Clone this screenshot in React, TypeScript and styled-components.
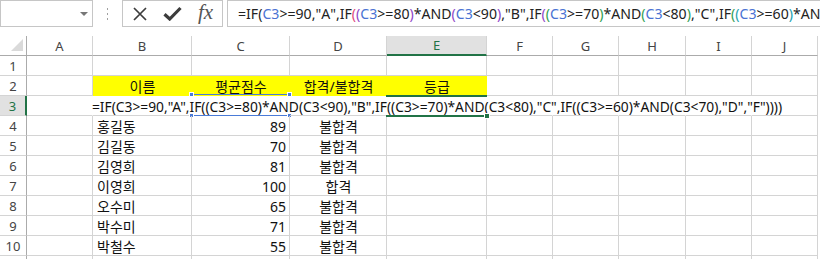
import styled, { createGlobalStyle } from 'styled-components';

const GlobalStyle = createGlobalStyle`
  *, *::before, *::after { box-sizing: border-box; }
  html, body { margin: 0; padding: 0; background: #fff; }
  body { font-family: 'Noto Sans', 'Noto Sans CJK KR', sans-serif; }
`;

const COLUMNS = ['A', 'B', 'C', 'D', 'E', 'F', 'G', 'H', 'I', 'J'];
const WIDTHS = [66, 99, 98, 97, 100, 66, 66, 67, 66, 66];

const HEADERS = ['이름', '평균점수', '합격/불합격', '등급'];

const STUDENTS: [string, number, string][] = [
  ['홍길동', 89, '불합격'],
  ['김길동', 70, '불합격'],
  ['김영희', 81, '불합격'],
  ['이영희', 100, '합격'],
  ['오수미', 65, '불합격'],
  ['박수미', 71, '불합격'],
  ['박철수', 55, '불합격'],
];

const FORMULA = '=IF(C3>=90,"A",IF((C3>=80)*AND(C3<90),"B",IF((C3>=70)*AND(C3<80),"C",IF((C3>=60)*AND(C3<70),"D","F"))))';

// formula bar colouring: refs blue, parens by nesting level
const REF = '#4a73d3';
const PAREN = ['#222', '#e0467c', '#8e44c8', '#2f9e52', '#1d9fb0', '#8e44c8'];

const tokenize = (src: string) => {
  const out: { text: string; color: string }[] = [];
  let depth = 0;
  let i = 0;
  while (i < src.length) {
    const ch = src[i];
    if (src.startsWith('C3', i)) {
      out.push({ text: 'C3', color: REF });
      i += 2;
    } else if (ch === '(') {
      out.push({ text: ch, color: PAREN[depth % PAREN.length] });
      depth++;
      i++;
    } else if (ch === ')') {
      depth--;
      out.push({ text: ch, color: PAREN[depth % PAREN.length] });
      i++;
    } else {
      out.push({ text: ch, color: '#222' });
      i++;
    }
  }
  return out;
};

const App = () => {
  const tokens = tokenize(FORMULA);

  const renderRow = (row: number) => {
    const cells = COLUMNS.map((col, ci) => {
      const key = `${col}${row}`;
      if (row === 2 && ci >= 1 && ci <= 4) {
        return (
          <Cell key={key} $align='center' $fill='#ffff00'>
            {HEADERS[ci - 1]}
          </Cell>
        );
      }
      if (row === 3) {
        return (
          <Cell key={key} $open={ci < 9} $align='center' $raised={col === 'E'}>
            {col === 'C' && (
              <RefFrame>
                <Handle $x='left' $y='top' />
                <Handle $x='right' $y='top' />
                <Handle $x='left' $y='bottom' />
                <Handle $x='right' $y='bottom' />
              </RefFrame>
            )}
            {col === 'E' && (
              <>
                <Overflow>{FORMULA}</Overflow>
                <SelectionFrame>
                  <FillHandle />
                </SelectionFrame>
              </>
            )}
          </Cell>
        );
      }
      if (row >= 4 && row <= 10) {
        const [name, score, result] = STUDENTS[row - 4];
        if (col === 'B') return <Cell key={key}>{name}</Cell>;
        if (col === 'C') return <Cell key={key} $align='right'>{score}</Cell>;
        if (col === 'D') return <Cell key={key} $align='center'>{result}</Cell>;
      }
      return <Cell key={key} />;
    });
    return [
      <RowHeader key={`h${row}`} $active={row === 3}>
        {row}
      </RowHeader>,
      ...cells,
    ];
  };

  return (
    <Window>
      <GlobalStyle />
      <FormulaBar>
        <NameBox>
          <svg width='8' height='4' viewBox='0 0 8 4'>
            <path d='M0 0h8L4 4z' fill='#777' />
          </svg>
        </NameBox>
        <Grip>
          <Dot />
          <Dot />
          <Dot />
        </Grip>
        <ButtonBox>
          <svg width='16' height='16' viewBox='0 0 16 16'>
            <path d='M2 2l12 12M14 2L2 14' stroke='#3c3c3c' strokeWidth='1.7' fill='none' />
          </svg>
          <svg width='19' height='15' viewBox='0 0 19 15'>
            <path d='M1.5 8.2l5.2 4.8L17.5 2' stroke='#3c3c3c' strokeWidth='3.2' fill='none' />
          </svg>
          <Fx>fx</Fx>
        </ButtonBox>
        <FormulaInput>
          {tokens.map((t, i) => (
            <span key={i} style={{ color: t.color }}>
              {t.text}
            </span>
          ))}
        </FormulaInput>
      </FormulaBar>
      <Sheet>
        <Corner>
          <Triangle />
        </Corner>
        {COLUMNS.map((col) => (
          <ColHeader key={col} $active={col === 'E'}>
            {col}
          </ColHeader>
        ))}
        {Array.from({ length: 11 }, (_, i) => renderRow(i + 1))}
      </Sheet>
    </Window>
  );
};

const Window = styled.div`
  width: 820px;
  height: 259px;
  overflow: hidden;
  background: #fff;
  display: flex;
  flex-direction: column;
  gap: 9px;
`;

const FormulaBar = styled.div`
  display: flex;
  height: 27px;
  flex-shrink: 0;
`;

const NameBox = styled.div`
  width: 93px;
  border: 1px solid #c6c6c6;
  display: flex;
  align-items: center;
  justify-content: flex-end;
  padding-right: 4px;
`;

const Grip = styled.div`
  width: 29px;
  display: flex;
  flex-direction: column;
  align-items: center;
  justify-content: center;
  gap: 3px;
`;

const Dot = styled.span`
  width: 1px;
  height: 2px;
  background: #a0a0a0;
`;

const ButtonBox = styled.div`
  width: 101px;
  border: 1px solid #c6c6c6;
  display: grid;
  grid-template-columns: repeat(3, 1fr);
  place-items: center;
  margin-right: 4px;
`;

const Fx = styled.span`
  font-family: 'Liberation Serif', serif;
  font-style: italic;
  font-size: 21px;
  color: #555;
  line-height: 1;
  margin-top: -3px;
`;

const FormulaInput = styled.div`
  flex: 1;
  border: 1px solid #c6c6c6;
  border-right: none;
  padding-left: 10px;
  display: flex;
  align-items: center;
  overflow: hidden;
  white-space: nowrap;
  font-size: 14.1px;
  color: #222;
`;

const Sheet = styled.div`
  display: grid;
  grid-template-columns: 27px ${WIDTHS.map((w) => `${w}px`).join(' ')};
  grid-auto-rows: 20px;
`;

const Corner = styled.div`
  display: flex;
  justify-content: flex-end;
  align-items: flex-end;
  padding: 0 3px 4px 0;
  border-right: 1px solid #ababab;
  border-bottom: 1px solid #ababab;
`;

const Triangle = styled.span`
  width: 0;
  height: 0;
  border-left: 12px solid transparent;
  border-bottom: 12px solid #dadada;
`;

const ColHeader = styled.div<{ $active?: boolean }>`
  display: flex;
  align-items: center;
  justify-content: center;
  font-size: 13px;
  color: ${(p) => (p.$active ? '#217346' : '#444')};
  background: ${(p) => (p.$active ? '#e1e1e1' : '#fff')};
  border-right: 1px solid #d4d4d4;
  border-bottom: ${(p) => (p.$active ? '2px solid #217346' : '1px solid #ababab')};
`;

const RowHeader = styled.div<{ $active?: boolean }>`
  display: flex;
  align-items: center;
  justify-content: center;
  font-size: 13px;
  color: ${(p) => (p.$active ? '#217346' : '#444')};
  background: ${(p) => (p.$active ? '#e1e1e1' : '#fff')};
  border-right: ${(p) => (p.$active ? '2px solid #217346' : '1px solid #ababab')};
  border-bottom: 1px solid #d4d4d4;
`;

const Cell = styled.div<{
  $align?: 'left' | 'center' | 'right';
  $fill?: string;
  $open?: boolean;
  $raised?: boolean;
}>`
  position: relative;
  display: flex;
  align-items: center;
  justify-content: ${(p) =>
    p.$align === 'center' ? 'center' : p.$align === 'right' ? 'flex-end' : 'flex-start'};
  padding: 1px 3px 0 4px;
  font-size: 14px;
  color: #111;
  white-space: nowrap;
  background: ${(p) => p.$fill ?? 'transparent'};
  border-right: 1px solid ${(p) => (p.$open ? 'transparent' : p.$fill ?? '#d4d4d4')};
  border-bottom: 1px solid ${(p) => p.$fill ?? '#d4d4d4'};
  z-index: ${(p) => (p.$raised ? 2 : 'auto')};
`;

const Overflow = styled.span`
  font-size: 13.8px;
  color: #111;
`;

const RefFrame = styled.span`
  position: absolute;
  left: -1px;
  right: -1px;
  top: -2px;
  bottom: -1px;
  border-top: 1px solid #4a7bd8;
  border-bottom: 1px solid #4a7bd8;
  pointer-events: none;
`;

const Handle = styled.span<{ $x: 'left' | 'right'; $y: 'top' | 'bottom' }>`
  position: absolute;
  width: 5px;
  height: 5px;
  background: #4a7bd8;
  border: 1px solid #fff;
  ${(p) => p.$x}: -2px;
  ${(p) => p.$y}: -3px;
`;

const SelectionFrame = styled.span`
  position: absolute;
  left: -1px;
  right: -1px;
  top: -1px;
  bottom: -2px;
  border-top: 2px solid #217346;
  border-bottom: 2px solid #217346;
  pointer-events: none;
`;

const FillHandle = styled.span`
  position: absolute;
  right: -3px;
  bottom: -4px;
  width: 6px;
  height: 6px;
  background: #217346;
  border: 1px solid #fff;
`;

export default App;
